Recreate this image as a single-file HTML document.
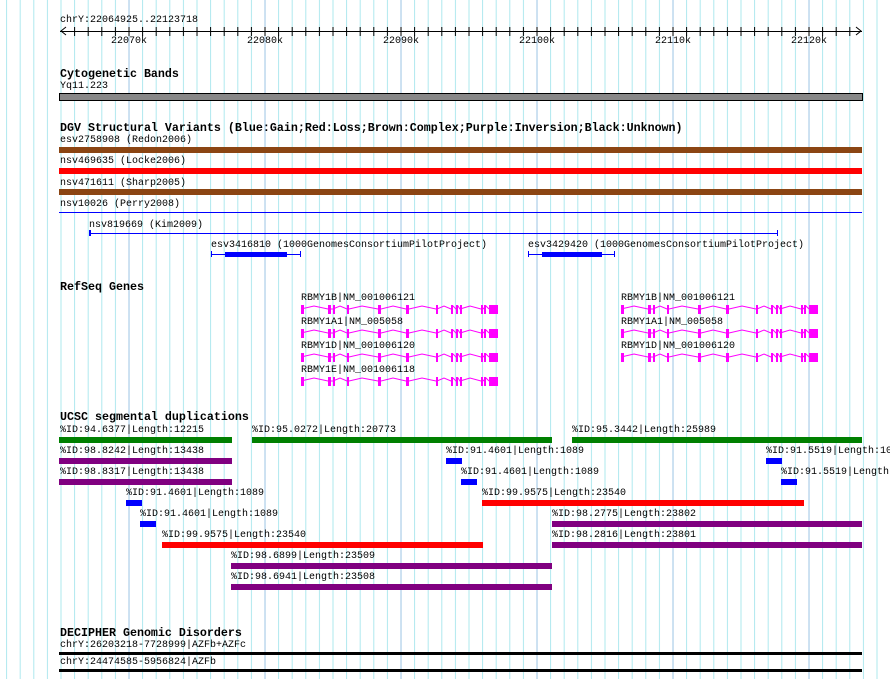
<!DOCTYPE html>
<html><head><meta charset="utf-8"><style>
body{margin:0;width:890px;height:679px;overflow:hidden;background:#fff;position:relative;font-family:"Liberation Mono",monospace;font-size:10px;color:#000}
.t{position:absolute;white-space:pre;line-height:11px;font-size:10px}
.b{position:absolute;font-weight:bold;font-size:11.67px;white-space:pre;line-height:12px}
.r{position:absolute;height:6px}
svg{position:absolute;left:0;top:0}
</style></head><body>
<svg width="890" height="679">
<defs>
<pattern id="lg" patternUnits="userSpaceOnUse" x="128.5" y="0" width="13.6" height="679"><rect x="0" y="0" width="1" height="679" fill="#aee8ee"/></pattern>
<pattern id="dg" patternUnits="userSpaceOnUse" x="128.5" y="0" width="136" height="679"><rect x="0" y="0" width="1" height="679" fill="#9cc4e4"/></pattern>
<pattern id="tk" patternUnits="userSpaceOnUse" x="128.5" y="27" width="13.6" height="9"><rect x="0" y="0" width="1" height="9" fill="#000"/></pattern>
<g id="gene" fill="#ff00ff" stroke="#ff00ff">
<polyline fill="none" stroke-width="1" points="301,309 314,306 328,309 331,309 333,309 340,306 347,309 349,309 362,306 378,309 381,309 393,306 406,309 409,309 422,306 436,309 437,309 444,306 451,309 453,306 456,309 458,306 460,309 470,306 481,309 483,309 486,306 489,309"/>
<rect x="301" y="305" width="3" height="9" stroke="none"/>
<rect x="328" y="305" width="3" height="9" stroke="none"/>
<rect x="333" y="305" width="2" height="9" stroke="none"/>
<rect x="347" y="305" width="2" height="9" stroke="none"/>
<rect x="378" y="305" width="3" height="9" stroke="none"/>
<rect x="406" y="305" width="3" height="9" stroke="none"/>
<rect x="436" y="305" width="2" height="9" stroke="none"/>
<rect x="451" y="305" width="2" height="9" stroke="none"/>
<rect x="456" y="305" width="2" height="9" stroke="none"/>
<rect x="460" y="305" width="2" height="9" stroke="none"/>
<rect x="481" y="305" width="2" height="9" stroke="none"/>
<rect x="484" y="305" width="2" height="9" stroke="none"/>
<rect x="489" y="305" width="9" height="9" stroke="none"/>
</g>
</defs>
<rect x="0" y="0" width="890" height="679" fill="url(#lg)"/>
<rect x="0" y="0" width="890" height="679" fill="url(#dg)"/>
<rect x="60" y="0" width="810" height="13" fill="#fff" opacity="0"/>
<!-- ruler -->
<rect x="60" y="31" width="802" height="1" fill="#000"/>
<rect x="62" y="27" width="790" height="9" fill="url(#tk)"/>
<polyline points="66,27 61,31 66,35" fill="none" stroke="#000"/>
<polyline points="856,27 861,31 856,35" fill="none" stroke="#000"/>
<!-- cyto -->
<rect x="59.5" y="93.5" width="803" height="7" fill="#888" stroke="#000"/>
<!-- DGV -->
<rect x="59" y="212" width="803" height="1" fill="#00f"/>
<rect x="89" y="233" width="689" height="1" fill="#00f"/>
<rect x="89" y="230" width="2" height="6" fill="#00f"/>
<rect x="777" y="230" width="1" height="6" fill="#00f"/>
<rect x="211" y="254" width="90" height="1" fill="#00f"/>
<rect x="211" y="251" width="1" height="6" fill="#00f"/>
<rect x="300" y="251" width="1" height="6" fill="#00f"/>
<rect x="225" y="252" width="62" height="5" fill="#00f"/>
<rect x="528" y="254" width="87" height="1" fill="#00f"/>
<rect x="528" y="251" width="1" height="6" fill="#00f"/>
<rect x="614" y="251" width="1" height="6" fill="#00f"/>
<rect x="542" y="252" width="60" height="5" fill="#00f"/>
<!-- genes -->
<use href="#gene"/>
<use href="#gene" y="24"/>
<use href="#gene" y="48"/>
<use href="#gene" y="72"/>
<use href="#gene" x="320"/>
<use href="#gene" x="320" y="24"/>
<use href="#gene" x="320" y="48"/>
<!-- decipher -->
<rect x="59" y="652" width="803" height="3" fill="#000"/>
<rect x="59" y="669" width="803" height="3" fill="#000"/>
</svg>

<div class="t" style="left:60px;top:15px">chrY:22064925..22123718</div>
<div class="t" style="left:111px;top:36px">22070k</div>
<div class="t" style="left:247px;top:36px">22080k</div>
<div class="t" style="left:383px;top:36px">22090k</div>
<div class="t" style="left:519px;top:36px">22100k</div>
<div class="t" style="left:655px;top:36px">22110k</div>
<div class="t" style="left:791px;top:36px">22120k</div>

<div class="b" style="left:60px;top:68px">Cytogenetic Bands</div>
<div class="t" style="left:60px;top:81px">Yq11.223</div>

<div class="b" style="left:60px;top:122px">DGV Structural Variants (Blue:Gain;Red:Loss;Brown:Complex;Purple:Inversion;Black:Unknown)</div>
<div class="t" style="left:60px;top:135px">esv2758908 (Redon2006)</div>
<div class="r" style="left:59px;top:147px;width:803px;background:#8b4513"></div>
<div class="t" style="left:60px;top:156px">nsv469635 (Locke2006)</div>
<div class="r" style="left:59px;top:168px;width:803px;background:#f00"></div>
<div class="t" style="left:60px;top:178px">nsv471611 (Sharp2005)</div>
<div class="r" style="left:59px;top:189px;width:803px;background:#8b4513"></div>
<div class="t" style="left:60px;top:199px">nsv10026 (Perry2008)</div>
<div class="t" style="left:89px;top:220px">nsv819669 (Kim2009)</div>
<div class="t" style="left:211px;top:240px">esv3416810 (1000GenomesConsortiumPilotProject)</div>
<div class="t" style="left:528px;top:240px">esv3429420 (1000GenomesConsortiumPilotProject)</div>

<div class="b" style="left:60px;top:281px">RefSeq Genes</div>
<div class="t" style="left:301px;top:293px">RBMY1B|NM_001006121</div>
<div class="t" style="left:301px;top:317px">RBMY1A1|NM_005058</div>
<div class="t" style="left:301px;top:341px">RBMY1D|NM_001006120</div>
<div class="t" style="left:301px;top:365px">RBMY1E|NM_001006118</div>
<div class="t" style="left:621px;top:293px">RBMY1B|NM_001006121</div>
<div class="t" style="left:621px;top:317px">RBMY1A1|NM_005058</div>
<div class="t" style="left:621px;top:341px">RBMY1D|NM_001006120</div>

<div class="b" style="left:60px;top:411px">UCSC segmental duplications</div>
<div class="t" style="left:60px;top:425px">%ID:94.6377|Length:12215</div>
<div class="r" style="left:59px;top:437px;width:173px;background:#008000"></div>
<div class="t" style="left:252px;top:425px">%ID:95.0272|Length:20773</div>
<div class="r" style="left:252px;top:437px;width:300px;background:#008000"></div>
<div class="t" style="left:572px;top:425px">%ID:95.3442|Length:25989</div>
<div class="r" style="left:572px;top:437px;width:290px;background:#008000"></div>

<div class="t" style="left:60px;top:446px">%ID:98.8242|Length:13438</div>
<div class="r" style="left:59px;top:458px;width:173px;background:#800080"></div>
<div class="t" style="left:446px;top:446px">%ID:91.4601|Length:1089</div>
<div class="r" style="left:446px;top:458px;width:16px;background:#00f"></div>
<div class="t" style="left:766px;top:446px">%ID:91.5519|Length:10</div>
<div class="r" style="left:766px;top:458px;width:16px;background:#00f"></div>

<div class="t" style="left:60px;top:467px">%ID:98.8317|Length:13438</div>
<div class="r" style="left:59px;top:479px;width:173px;background:#800080"></div>
<div class="t" style="left:461px;top:467px">%ID:91.4601|Length:1089</div>
<div class="r" style="left:461px;top:479px;width:16px;background:#00f"></div>
<div class="t" style="left:781px;top:467px">%ID:91.5519|Length</div>
<div class="r" style="left:781px;top:479px;width:16px;background:#00f"></div>

<div class="t" style="left:126px;top:488px">%ID:91.4601|Length:1089</div>
<div class="r" style="left:126px;top:500px;width:16px;background:#00f"></div>
<div class="t" style="left:482px;top:488px">%ID:99.9575|Length:23540</div>
<div class="r" style="left:482px;top:500px;width:322px;background:#f00"></div>

<div class="t" style="left:140px;top:509px">%ID:91.4601|Length:1089</div>
<div class="r" style="left:140px;top:521px;width:16px;background:#00f"></div>
<div class="t" style="left:552px;top:509px">%ID:98.2775|Length:23802</div>
<div class="r" style="left:552px;top:521px;width:310px;background:#800080"></div>

<div class="t" style="left:162px;top:530px">%ID:99.9575|Length:23540</div>
<div class="r" style="left:162px;top:542px;width:321px;background:#f00"></div>
<div class="t" style="left:552px;top:530px">%ID:98.2816|Length:23801</div>
<div class="r" style="left:552px;top:542px;width:310px;background:#800080"></div>

<div class="t" style="left:231px;top:551px">%ID:98.6899|Length:23509</div>
<div class="r" style="left:231px;top:563px;width:321px;background:#800080"></div>
<div class="t" style="left:231px;top:572px">%ID:98.6941|Length:23508</div>
<div class="r" style="left:231px;top:584px;width:321px;background:#800080"></div>

<div class="b" style="left:60px;top:627px">DECIPHER Genomic Disorders</div>
<div class="t" style="left:60px;top:640px">chrY:26203218-7728999|AZFb+AZFc</div>
<div class="t" style="left:60px;top:657px">chrY:24474585-5956824|AZFb</div>
</body></html>
